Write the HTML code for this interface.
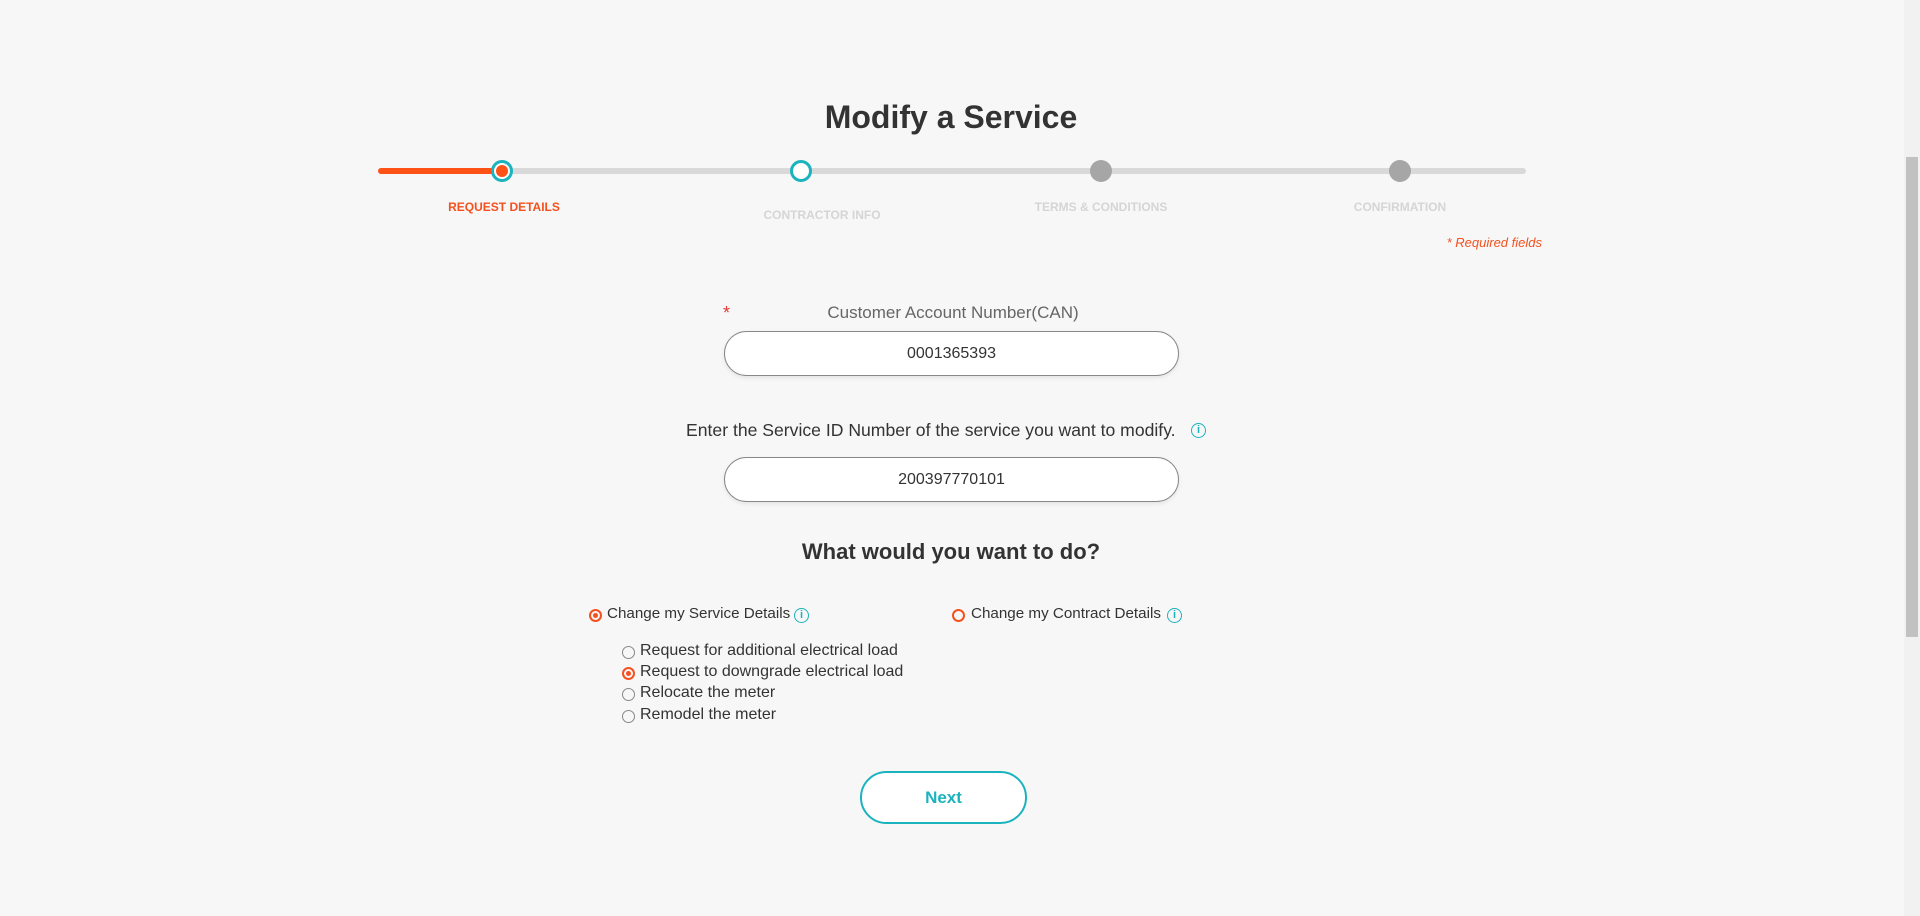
<!DOCTYPE html>
<html><head><style>
html,body{margin:0;padding:0;width:1920px;height:916px;overflow:hidden;background:#f7f7f7;font-family:"Liberation Sans",sans-serif;color:#333;}
.a{position:absolute;}
.c{transform:translateX(-50%);white-space:nowrap;}
.dot{position:absolute;width:22px;height:22px;border-radius:50%;box-sizing:border-box;top:160px;margin-left:-11px;}
.lbl{position:absolute;font-size:12px;font-weight:bold;color:#d5d5d5;transform:translateX(-50%);white-space:nowrap;}
.inp{position:absolute;left:724px;width:455px;height:45px;border:1px solid #888;border-radius:23px;background:#fff;box-sizing:border-box;text-align:center;line-height:43px;font-size:16px;color:#333;box-shadow:0 2px 4px rgba(0,0,0,.08);}
.info{position:absolute;width:15px;height:15px;border:1.5px solid #1bb3bd;border-radius:50%;box-sizing:border-box;color:#1bb3bd;font-size:11px;font-weight:bold;text-align:center;line-height:13px;}
.r{position:absolute;width:13px;height:13px;border-radius:50%;box-sizing:border-box;border:1.5px solid #888;}
.r.on{border:2px solid #f4511e;}
.r.dotd::after{content:"";position:absolute;left:2px;top:2px;width:5px;height:5px;border-radius:50%;background:#f4511e;}
.t{position:absolute;font-size:16px;color:#333;white-space:nowrap;}
</style></head><body>
<div class="a c" style="left:951px;top:99px;font-size:32px;font-weight:bold;color:#333;">Modify a Service</div>
<div class="a" style="left:378px;top:168px;width:1148px;height:6px;background:#d9d9d9;border-radius:3px;"></div>
<div class="a" style="left:378px;top:168px;width:124px;height:6px;background:#ff5217;border-radius:3px;"></div>
<div class="dot" style="left:502px;border:3px solid #1bb3bd;background:#fff;"><div style="position:absolute;left:2px;top:2px;width:12px;height:12px;border-radius:50%;background:#ff5217;"></div></div>
<div class="dot" style="left:801px;border:3px solid #1bb3bd;background:#fff;"></div>
<div class="dot" style="left:1101px;background:#a6a6a6;"></div>
<div class="dot" style="left:1400px;background:#a6a6a6;"></div>
<div class="lbl" style="left:504px;top:200px;color:#f4511e;">REQUEST DETAILS</div>
<div class="lbl" style="left:822px;top:208px;">CONTRACTOR INFO</div>
<div class="lbl" style="left:1101px;top:200px;">TERMS &amp; CONDITIONS</div>
<div class="lbl" style="left:1400px;top:200px;">CONFIRMATION</div>
<div class="a" style="right:378px;top:235px;font-size:13px;font-style:italic;color:#f4511e;">* Required fields</div>

<div class="a" style="left:723px;top:303px;color:#e53935;font-size:18px;">*</div>
<div class="a c" style="left:953px;top:303px;font-size:17px;color:#666;">Customer Account Number(CAN)</div>
<div class="inp" style="top:331px;">0001365393</div>
<div class="a" style="left:686px;top:420px;font-size:17.6px;color:#333;white-space:nowrap;">Enter the Service ID Number of the service you want to modify.</div>
<div class="info" style="left:1191px;top:423px;">i</div>
<div class="inp" style="top:457px;">200397770101</div>
<div class="a c" style="left:951px;top:539px;font-size:22px;font-weight:bold;color:#333;">What would you want to do?</div>

<div class="r on dotd" style="left:589px;top:609px;"></div>
<div class="t" style="left:607px;top:605px;font-size:15.2px;">Change my Service Details</div>
<div class="info" style="left:794px;top:608px;">i</div>
<div class="r on" style="left:952px;top:609px;"></div>
<div class="t" style="left:971px;top:605px;font-size:15.2px;">Change my Contract Details</div>
<div class="info" style="left:1167px;top:608px;">i</div>

<div class="r" style="left:622px;top:646px;"></div><div class="t" style="left:640px;top:642px;">Request for additional electrical load</div>
<div class="r on dotd" style="left:622px;top:667px;"></div><div class="t" style="left:640px;top:663px;">Request to downgrade electrical load</div>
<div class="r" style="left:622px;top:688px;"></div><div class="t" style="left:640px;top:684px;">Relocate the meter</div>
<div class="r" style="left:622px;top:710px;"></div><div class="t" style="left:640px;top:706px;">Remodel the meter</div>

<div class="a" style="left:860px;top:771px;width:167px;height:53px;border:2px solid #1bb3bd;border-radius:27px;box-sizing:border-box;text-align:center;line-height:49px;color:#1bb3bd;font-weight:bold;font-size:17px;background:#fff;">Next</div>

<div class="a" style="left:1904px;top:0;width:16px;height:916px;background:#f1f1f1;"></div>
<div class="a" style="left:1906px;top:157px;width:12px;height:480px;background:#c1c1c1;"></div>
</body></html>
